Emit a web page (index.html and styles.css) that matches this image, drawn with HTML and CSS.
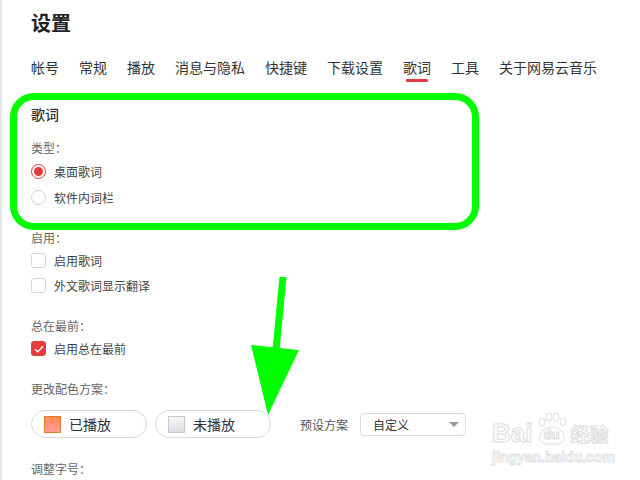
FILE: index.html
```html
<!DOCTYPE html>
<html lang="zh">
<head>
<meta charset="utf-8">
<link rel="stylesheet" href="styles.css">
</head>
<body>
<div class="page">
  <h1 class="title">设置</h1>
  <nav class="tabs">
    <span class="tab">帐号</span>
    <span class="tab">常规</span>
    <span class="tab">播放</span>
    <span class="tab">消息与隐私</span>
    <span class="tab">快捷键</span>
    <span class="tab">下载设置</span>
    <span class="tab active">歌词</span>
    <span class="tab">工具</span>
    <span class="tab">关于网易云音乐</span>
  </nav>

  <h2 class="section">歌词</h2>

  <div class="label first">类型：</div>
  <div class="row radio-row"><span class="radio on"></span><span>桌面歌词</span></div>
  <div class="row radio-row"><span class="radio"></span><span>软件内词栏</span></div>

  <div class="label">启用：</div>
  <div class="row check-row"><span class="check"></span><span>启用歌词</span></div>
  <div class="row check-row"><span class="check"></span><span>外文歌词显示翻译</span></div>

  <div class="label">总在最前：</div>
  <div class="row check-row"><span class="check on"><svg width="10" height="8" viewBox="0 0 10 8"><path d="M1 4.2 L3.8 6.8 L9 1.2" fill="none" stroke="#fff" stroke-width="1.4"/></svg></span><span>启用总在最前</span></div>

  <div class="label">更改配色方案：</div>
  <div class="scheme">
    <span class="pill"><span class="swatch played"></span>已播放</span>
    <span class="pill"><span class="swatch unplayed"></span>未播放</span>
    <span class="preset-label">预设方案</span>
    <span class="select">自定义<span class="caret"></span></span>
  </div>

  <div class="label size-label">调整字号：</div>
</div>

<div class="highlight"></div>
<svg class="arrow" width="640" height="480" viewBox="0 0 640 480">
  <line x1="283" y1="277" x2="276" y2="350" stroke="#00ff00" stroke-width="7"/>
  <polygon points="251,345 299,350 268,415" fill="#00ff00"/>
</svg>

<div class="watermark">
  <div class="wm-top">
    <span class="wm-bai">Bai</span>
    <span class="wm-paw">
      <svg width="36" height="34" viewBox="0 0 36 34">
        <g fill="none" stroke="#dedede" stroke-width="1">
          <ellipse cx="8" cy="10" rx="3" ry="4"/>
          <ellipse cx="15" cy="5" rx="3" ry="4"/>
          <ellipse cx="22" cy="5" rx="3" ry="4"/>
          <ellipse cx="29" cy="10" rx="3" ry="4"/>
          <path d="M6 28 Q4 17 18 15 Q32 17 30 28 Q28 33 18 32 Q8 33 6 28 Z"/>
        </g>
      </svg>
      <span class="wm-du">du</span>
    </span>
    <span class="wm-jy">经验</span>
  </div>
  <div class="wm-url">jingyan.baidu.com</div>
</div>
</body>
</html>
```

FILE: styles.css
```css
* { box-sizing: border-box; }
html, body { margin: 0; padding: 0; background: #fff; }
body {
  width: 640px;
  height: 480px;
  overflow: hidden;
  position: relative;
  border-left: 2px solid #e4e4e4;
  font-family: "Noto Sans CJK SC", "Noto Sans", sans-serif;
  color: #333;
}
.page { padding: 9px 0 0 29px; }
.title {
  margin: 0;
  font-size: 20px;
  line-height: 28px;
  font-weight: 700;
  color: #222;
}
.tabs {
  display: flex;
  align-items: flex-start;
  gap: 20px;
  margin-top: 20px;
}
.tab {
  display: flex;
  flex-direction: column;
  align-items: center;
  font-size: 14px;
  line-height: 20px;
  color: #333;
}
.tab.active::after {
  content: "";
  display: block;
  width: 22px;
  height: 3px;
  margin-top: 2px;
  background: #e33c3c;
  border-radius: 1px;
}
.section {
  margin: 22px 0 0;
  font-size: 14px;
  line-height: 20px;
  font-weight: 500;
  color: #333;
}
.label {
  font-size: 12px;
  line-height: 20px;
  color: #666;
  margin-top: 18px;
}
.label.first { margin-top: 14px; }
.row {
  display: flex;
  align-items: center;
  gap: 8px;
  font-size: 12px;
  color: #444;
}
.radio-row { height: 26px; }
.check-row { height: 25px; }
.radio {
  width: 15px;
  height: 15px;
  border-radius: 50%;
  border: 1px solid #cfcfcf;
  background: #fff;
  display: flex;
  align-items: center;
  justify-content: center;
}
.radio.on { border-color: #e33c3c; }
.radio.on::after {
  content: "";
  width: 9px;
  height: 9px;
  border-radius: 50%;
  background: #e33c3c;
}
.check {
  width: 15px;
  height: 15px;
  border-radius: 3px;
  border: 1px solid #d4d4d4;
  background: #fff;
  display: flex;
  align-items: center;
  justify-content: center;
}
.check.on { background: #e33c3c; border-color: #e33c3c; }
.scheme {
  display: flex;
  align-items: center;
  margin-top: 11px;
  height: 28px;
}
.pill {
  display: flex;
  align-items: center;
  gap: 8px;
  width: 116px;
  height: 28px;
  padding-left: 12px;
  border: 1px solid #d9d9d9;
  border-radius: 14px;
  font-size: 14px;
  color: #333;
}
.pill + .pill { margin-left: 8px; }
.swatch {
  width: 17px;
  height: 17px;
  border: 1px solid #e77b2d;
}
.swatch.played { background: linear-gradient(#ff8b55, #ff9c9c); }
.swatch.unplayed { background: linear-gradient(#f7f7f9, #dcdce2); border-color: #c8c8cc; }
.preset-label {
  margin-left: 29px;
  font-size: 12px;
  color: #555;
}
.select {
  display: flex;
  align-items: center;
  justify-content: space-between;
  margin-left: 12px;
  width: 106px;
  height: 23px;
  padding: 0 6px 0 12px;
  border: 1px solid #dcdcdc;
  border-radius: 4px;
  font-size: 12px;
  color: #333;
}
.caret {
  width: 0;
  height: 0;
  border-left: 5px solid transparent;
  border-right: 5px solid transparent;
  border-top: 5px solid #999;
}
.size-label { margin-top: 21px; }

.highlight {
  position: absolute;
  left: 8px;
  top: 93px;
  width: 469px;
  height: 137px;
  border: 7px solid #00ff00;
  border-radius: 24px;
}
.arrow { position: absolute; left: -2px; top: 0; }

.watermark {
  position: absolute;
  left: 490px;
  top: 408px;
  color: #fff;
  font-family: "Liberation Sans", sans-serif;
}
.wm-top { display: flex; align-items: flex-end; height: 38px; }
.wm-bai {
  font-size: 26px;
  font-weight: 700;
  line-height: 26px;
  color: #fff;
  -webkit-text-stroke: 1px #dcdcdc;
}
.wm-paw { position: relative; width: 36px; height: 34px; margin-left: 2px; }
.wm-paw svg { position: absolute; left: 0; top: 0; }
.wm-du {
  position: absolute;
  left: 9px;
  top: 15px;
  font-size: 13px;
  font-weight: 700;
  color: #fff;
  -webkit-text-stroke: 1px #dcdcdc;
}
.wm-jy {
  font-family: "Noto Sans CJK SC", sans-serif;
  font-size: 19px;
  line-height: 24px;
  font-weight: 700;
  color: #fff;
  -webkit-text-stroke: 1px #dcdcdc;
}
.wm-url {
  margin-top: 3px;
  font-size: 14px;
  font-weight: 700;
  color: #fff;
  -webkit-text-stroke: 1px #e2e2e2;
}
```
